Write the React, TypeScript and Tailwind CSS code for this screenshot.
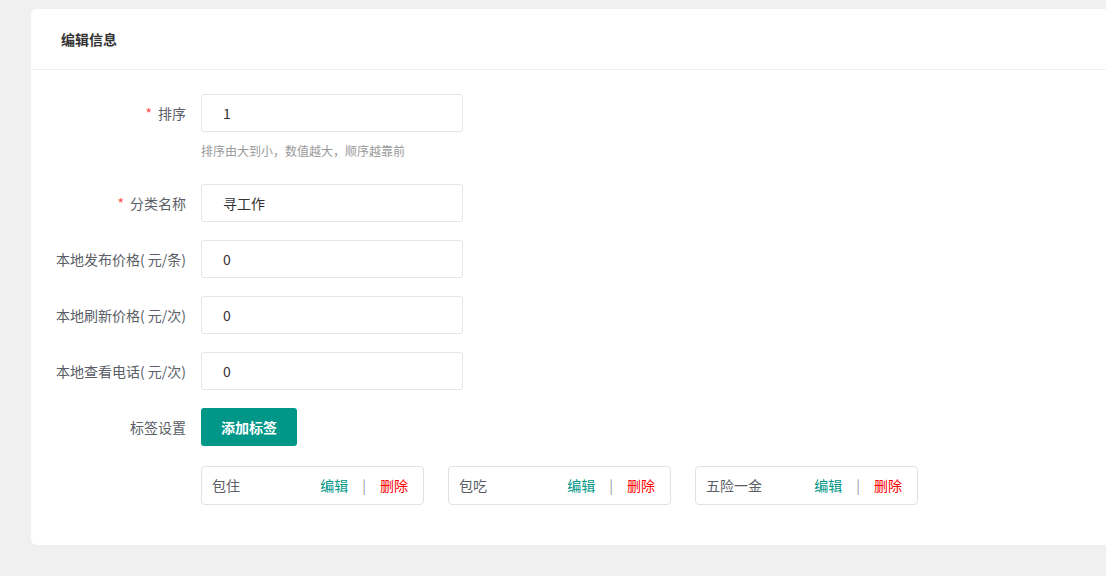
import React from 'react'

const FONT = { fontFamily: '"Microsoft YaHei", "Noto Sans CJK SC", "Liberation Sans", sans-serif' }

const ROWS = [
  { label: '排序', required: true, value: '1', hint: '排序由大到小，数值越大，顺序越靠前' },
  { label: '分类名称', required: true, value: '寻工作' },
  { label: '本地发布价格( 元/条)', value: '0' },
  { label: '本地刷新价格( 元/次)', value: '0' },
  { label: '本地查看电话( 元/次)', value: '0' },
]

const TAGS = ['包住', '包吃', '五险一金']

function Label({ text, required }: { text: string; required?: boolean }) {
  return (
    <div className="w-[170px] shrink-0 pr-[15px] text-right text-[14px] text-[#5a5e66] leading-[38px] whitespace-nowrap">
      {required && <span className="text-[#ff4d4f] mr-[6px]">*</span>}
      {text}
    </div>
  )
}

export default function App() {
  return (
    <div className="w-[1106px] h-[576px] overflow-hidden bg-[#f0f0f0] pl-[31px] pt-[9px]" style={FONT}>
      <div className="w-[1100px] h-[536px] bg-white rounded-l-[6px]">
        {/* 标题 */}
        <div className="h-[61px] border-b border-[#f0f0f0] pl-[30px] flex items-center">
          <span className="text-[14px] font-bold text-[#333]">编辑信息</span>
        </div>

        {/* 表单 */}
        <div className="pt-[24px]">
          {ROWS.map((r, i) => (
            <div key={i} className={r.hint ? 'mb-[26px]' : 'mb-[18px]'}>
              <div className="flex">
                <Label text={r.label} required={r.required} />
                <input
                  readOnly
                  value={r.value}
                  className="w-[262px] h-[38px] border border-[#e6e6e6] rounded-[3px] pl-[21px] text-[14px] text-[#333] outline-none"
                />
              </div>
              {r.hint && (
                <div className="pl-[170px] mt-[12px] text-[12px] text-[#999] leading-[14px]">{r.hint}</div>
              )}
            </div>
          ))}

          <div className="flex">
            <Label text="标签设置" />
            <button className="w-[96px] h-[38px] rounded-[3px] bg-[#009688] text-white text-[14px] font-bold">
              添加标签
            </button>
          </div>

          <div className="flex gap-[24px] pl-[170px] mt-[20px]">
            {TAGS.map(t => (
              <div key={t} className="w-[223px] h-[39px] border border-[#e2e2e2] rounded-[4px] flex items-center pl-[10px] text-[14px]">
                <span className="flex-1 text-[#5a5e66]">{t}</span>
                <span className="text-[#009688]">编辑</span>
                <span className="text-[#999] mx-[14px]">|</span>
                <span className="text-[#ff0000] mr-[15px]">删除</span>
              </div>
            ))}
          </div>
        </div>
      </div>
    </div>
  )
}
